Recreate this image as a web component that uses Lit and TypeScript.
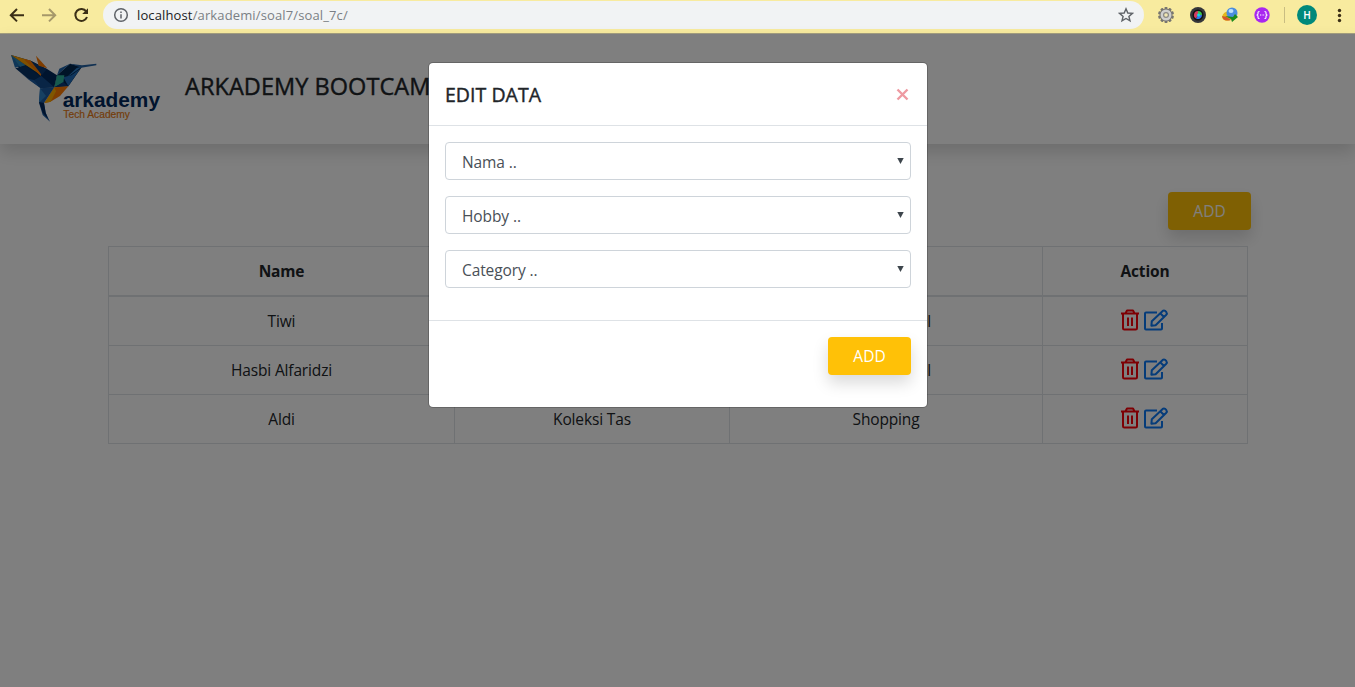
import { LitElement, html, css, svg } from "lit";
import { customElement } from "lit/decorators.js";

const logo = html`<svg class="logo" viewBox="0 0 540 360" aria-label="arkademy">
  <polygon points="33,63 92,80 140,104 171,124 163,160 122,162 88,136 58,104" fill="#00285c" />
  <polygon points="33,63 60,97 45,101" fill="#1f6db0" />
  <polygon points="33,63 78,93 60,99" fill="#2d89b8" />
  <polygon points="33,63 92,80 122,122 78,94" fill="#ffa300" />
  <polygon points="70,74 92,80 128,110 122,126" fill="#ff7d00" />
  <polygon points="92,80 140,106 126,124" fill="#0a3873" />
  <polygon points="46,103 78,95 122,128 100,138 84,134" fill="#063267" />
  <polygon points="50,105 84,134 106,139 122,163 84,136" fill="#1c5ba1" />
  <polygon points="102,138 124,126 163,160 122,163" fill="#134b8c" />
  <polygon points="108,65 142,103 116,95" fill="#ff7a00" />
  <polygon points="171,124 210,89 246,98 205,157 163,160" fill="#00264f" />
  <polygon points="171,124 210,89 178,104" fill="#1d62a8" />
  <polygon points="246,98 212,122 202,128 230,102" fill="#2a7cc7" />
  <polygon points="240,105 205,157 190,130 214,124" fill="#1f6bb8" />
  <polygon points="210,89 246,94 289,89 289,94 244,101" fill="#2463a5" />
  <polygon points="171,124 193,124 190,146 163,160" fill="#2fb59c" />
  <polygon points="190,144 205,157 163,160" fill="#0a3a78" />
  <polygon points="163,160 205,157 180,186 150,204 133,207" fill="#ff7a00" />
  <polygon points="163,160 168,172 152,203 133,207" fill="#ffae00" />
  <polygon points="120,163 163,160 132,207 137,236 150,263 128,243 117,206" fill="#1c5ba1" />
  <polygon points="120,163 138,186 117,206" fill="#2d80c4" />
  <polygon points="117,204 132,207 137,236 144,254 128,236" fill="#00285c" />
  <text class="brand-name" x="188" y="219" textLength="292" lengthAdjust="spacingAndGlyphs">arkademy</text>
  <text class="brand-sub" x="190" y="252" textLength="200" lengthAdjust="spacingAndGlyphs">Tech Academy</text>
</svg>`;

const trash = html`<svg class="trash" width="20" height="24" viewBox="0 0 20 24">
  <path d="M1 5.5H19M5.500 5.200L7 2.500H13L14.500 5.200M3 5.500V20.200Q3 21.500 4.300 21.500H15.700Q17 21.500 17 20.200V5.500M8 9.500V18M12 9.500V18" />
</svg>`;

const edit = html`<svg class="edit" width="26" height="24" viewBox="0 0 26 24">
  <path d="M14 4.500H3Q2 4.500 2 5.500V20.500Q2 21.500 3 21.500H18Q19 21.500 19 20.500V15M8.800 13.200L19.700 2.900Q21 1.900 22.400 3.100L23.300 4Q24.400 5.400 23.300 6.700L12.600 17.200L8.400 17.700ZM17.200 5.200L21 9" />
</svg>`;

const teeth = Array.from({ length: 10 }, (_, i) => svg`<rect x="-1.5" y="-8" width="3" height="4" rx=".8" transform="rotate(${i * 36})" />`);

@customElement("app-root")
export class AppRoot extends LitElement {
  static styles = css`
    :host { display: flex; flex-direction: column; width: 1355px; height: 687px; overflow: hidden;
      font-family: "Open Sans", "Noto Sans", sans-serif; font-size: 15.5px; line-height: 24px; color: #212529; background: #fff; }
    * { box-sizing: border-box; }
    svg { display: block; flex: none; }
    .toolbar { height: 34px; flex: none; display: flex; background: #f8eb9f; border-bottom: 1px solid #a49f80; padding-top: 1px; }
    .nav { width: 103px; }
    .address { width: 1041px; height: 28px; border-radius: 14px; background: #f1f3f4; display: flex; align-items: center; padding: 0 10px; }
    .url { font-size: 13px; letter-spacing: .13px; color: #7a7f84; margin-left: 8px; flex: 1; line-height: 20px; }
    .url b { font-weight: 400; color: #202124; }
    .page { position: relative; flex: 1; }
    .header { height: 110px; display: flex; box-shadow: 0 8px 16px rgba(0,0,0,.15); background: #fff; }
    .logo { width: 180px; height: 120px; overflow: visible; }
    .brand-name { font: bold 61px "Liberation Sans", Arial, sans-serif; fill: #00285c; }
    .brand-sub { font: 32px "Liberation Sans", Arial, sans-serif; fill: #e87b14; stroke: #e87b14; stroke-width: .6; }
    .title { margin: 37px 0 0 5px; font-size: 23.500px; line-height: 30px; font-weight: 500; letter-spacing: .05px; -webkit-text-stroke: .4px currentColor; }
    .content { padding: 48px 0 0 108px; width: 1251px; display: flex; flex-direction: column; }
    .btn { width: 83px; height: 38px; border: 0; border-radius: 4px; background: #ffc107; color: #fff; font: inherit; padding: 0;
      box-shadow: 0 8px 16px rgba(0,0,0,.15); align-self: flex-end; }
    table { width: 1140px; margin-top: 16px; border-collapse: collapse; table-layout: fixed; text-align: center; letter-spacing: -.15px; }
    th, td { border: 1px solid #dee2e6; height: 49px; padding: 0; }
    th { border-bottom-width: 2px; font-weight: 700; height: 49.500px; }
    .c1 { width: 346px; } .c2 { width: 275px; } .c3 { width: 313px; }
    .actions { display: flex; justify-content: center; gap: 3px; height: 24px; margin: -2px 0 0 -1px; }
    .trash, .edit { fill: none; stroke-width: 2; stroke-linejoin: round; }
    .trash { stroke: #fa0008; }
    .edit { stroke: #0a78f5; }
    .backdrop { position: absolute; inset: 0; background: rgba(0,0,0,.5); display: flex; justify-content: center; align-items: flex-start; padding-top: 28px; }
    .modal { width: 500px; background: #fff; background-clip: padding-box; border: 1px solid rgba(0,0,0,.2); border-radius: 5px; margin-left: 1px; }
    .modal-head { height: 63px; padding: 16px; border-bottom: 1px solid #dee2e6; display: flex; justify-content: space-between; }
    .modal-title { margin: 0; font-size: 19.500px; line-height: 31px; font-weight: 500; letter-spacing: .03px; -webkit-text-stroke: .4px currentColor; }
    .close { margin: 9px 2px 0 0; stroke: #ee9aa2; stroke-width: 2.400; }
    .fields { padding: 16px 16px 32px; display: flex; flex-direction: column; gap: 16px; }
    .select { height: 38px; border: 1px solid #ced4da; border-radius: 4px; padding: 2px 6px 0 16px; display: flex; justify-content: space-between; align-items: center; color: #495057; letter-spacing: -.1px; }
    .select svg { fill: #3d454c; margin-top: -3px; }
    .modal-foot { height: 87px; border-top: 1px solid #dee2e6; padding: 16px; display: flex; justify-content: flex-end; align-items: flex-start; }
    .modal-foot .btn { align-self: flex-start; }
    .avatar { font: 500 10px Roboto, sans-serif; fill: #fff; }
  `;

  row(name: string, hobby: string, category: string) {
    return html`<tr><td>${name}</td><td>${hobby}</td><td>${category}</td><td><div class="actions">${trash}${edit}</div></td></tr>`;
  }

  select(label: string) {
    return html`<div class="select"><span>${label}</span><svg width="7" height="6" viewBox="0 0 7 6"><path d="M.3 0H6.700L3.500 6Z" /></svg></div>`;
  }

  render() {
    return html`
      <div class="toolbar">
        <svg class="nav" width="103" height="28" viewBox="0 1 103 28" fill="none" stroke-width="2">
          <path d="M24 15.200H11M17 9L10.800 15.200L17 21.400" stroke="#3b2f16" />
          <path d="M42 15.200H55M49 9L55.200 15.200L49 21.400" stroke="#a5986a" />
          <path d="M86.300 11.500A6 6 0 1 0 87 17" stroke="#3b2f16" />
          <path d="M88 8.200V14H82.200Z" fill="#3b2f16" />
        </svg>
        <div class="address">
          <svg width="16" height="16" viewBox="0 0 16 16" fill="none" stroke="#5f6368" stroke-width="1.5">
            <circle cx="8" cy="8" r="6.300" /><path d="M8 7.200V11.500M8 4.500V6" />
          </svg>
          <span class="url"><b>localhost</b>/arkademi/soal7/soal_7c/</span>
          <svg width="16" height="16" viewBox="0 0 16 16" fill="none" stroke="#5f6368" stroke-width="1.4">
            <path d="M8 1.800L9.800 6L14.400 6.400L10.900 9.400L12 13.900L8 11.500L4 13.900L5.100 9.400L1.600 6.400L6.200 6Z" />
          </svg>
        </div>
        <svg width="211" height="28" viewBox="1144 1 211 28">
          <g transform="translate(1166 15)" fill="#77756f">
            ${teeth}<circle r="6.300" fill="#77756f" /><circle r="5.500" fill="#cfcfcd" /><circle r="3" fill="#8c8a86" /><circle r="1.800" fill="#f1e8b4" />
          </g>
          <circle cx="1198" cy="15" r="8" fill="#35363a" /><circle cx="1198" cy="15" r="5.500" fill="#111" />
          <path d="M1198 15V11A4 4 0 0 1 1202 15Z" fill="#3fbf4d" />
          <path d="M1198 15H1202A4 4 0 0 1 1196 18.500Z" fill="#3176ed" />
          <path d="M1198 15L1196 18.500A4 4 0 0 1 1198 11Z" fill="#d43c60" />
          <circle cx="1198.500" cy="15" r="1.500" fill="#16d5e8" />
          <ellipse cx="1228" cy="16" rx="6" ry="4.500" fill="#e5b91c" transform="rotate(-20 1228 16)" />
          <path d="M1222 16Q1223 22 1231 20L1227 17Z" fill="#d4572b" />
          <circle cx="1232" cy="13" r="5.500" fill="#4b8dde" /><ellipse cx="1231" cy="11" rx="2.500" ry="2" fill="#bce0fa" />
          <path d="M1225 16L1233 17L1235 14L1238 17L1232 22L1231 19Z" fill="#1b8a1b" />
          <circle cx="1262" cy="15" r="7.700" fill="#a927f0" />
          <path d="M1259.500 11.500Q1257.800 11.500 1258 13Q1258.200 15 1256.500 15Q1258.200 15 1258 17Q1257.800 18.500 1259.500 18.500M1264.500 11.500Q1266.200 11.500 1266 13Q1265.800 15 1267.500 15Q1265.800 15 1266 17Q1266.200 18.500 1264.500 18.500M1260 15H1261M1261.700 15H1262.500M1263.200 15H1264.200" fill="none" stroke="#fff" stroke-width="1.100" />
          <path d="M1284.500 7V23" stroke="#c9bd82" />
          <circle cx="1307" cy="15" r="10" fill="#00897b" /><text class="avatar" x="1303.400" y="18.600">H</text>
          <g fill="#3b2f16"><circle cx="1339.500" cy="10.500" r="1.700" /><circle cx="1339.500" cy="15.500" r="1.700" /><circle cx="1339.500" cy="20.500" r="1.700" /></g>
        </svg>
      </div>
      <div class="page">
        <div class="header">${logo}<h1 class="title">ARKADEMY BOOTCAMP</h1></div>
        <div class="content">
          <button class="btn">ADD</button>
          <table>
            <colgroup><col class="c1" /><col class="c2" /><col class="c3" /><col /></colgroup>
            <thead><tr><th>Name</th><th>Hobby</th><th>Category</th><th>Action</th></tr></thead>
            <tbody>
              ${this.row("Tiwi", "Travel", "Arts & Travel")}
              ${this.row("Hasbi Alfaridzi", "Travel", "Arts & Travel")}
              ${this.row("Aldi", "Koleksi Tas", "Shopping")}
            </tbody>
          </table>
        </div>
        <div class="backdrop">
          <div class="modal">
            <div class="modal-head">
              <h2 class="modal-title">EDIT DATA</h2>
              <svg class="close" width="13" height="13" viewBox="0 0 13 13"><path d="M1.500 1.500L11.500 11.500M11.500 1.500L1.500 11.500" /></svg>
            </div>
            <div class="fields">${this.select("Nama ..")}${this.select("Hobby ..")}${this.select("Category ..")}</div>
            <div class="modal-foot"><button class="btn">ADD</button></div>
          </div>
        </div>
      </div>
    `;
  }
}
